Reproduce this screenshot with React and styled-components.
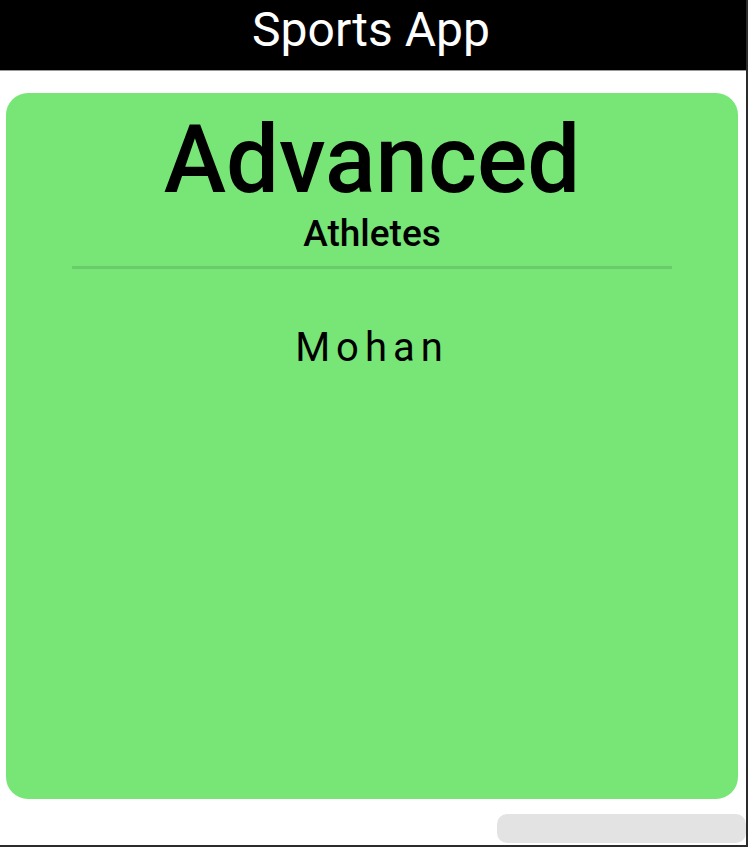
import React from "react"
import styled, { createGlobalStyle } from "styled-components"

const GlobalStyle = createGlobalStyle`
  html, body {
    margin: 0;
    padding: 0;
    background: #ffffff;
  }
  body {
    font-family: Roboto, "Noto Sans", sans-serif;
  }
`

const Screen = styled.div`
  width: 748px;
  height: 847px;
  box-sizing: border-box;
  border-right: 2px solid #2b2b2b;
  border-bottom: 2px solid #2b2b2b;
  display: flex;
  flex-direction: column;
  overflow: hidden;
`

const TopBar = styled.header`
  height: 71px;
  flex-shrink: 0;
  background: #000000;
  border-bottom: 1px solid #9a9a9a;
  display: flex;
  justify-content: center;
  padding-top: 6px;
  box-sizing: border-box;
`

const Title = styled.h1`
  margin: 0;
  color: #ffffff;
  font-size: 48px;
  font-weight: 400;
  line-height: 48px;
  padding-right: 4px;
`

const Content = styled.main`
  padding: 22px 8px 0 6px;
`

const Card = styled.section`
  height: 706px;
  background: #77e677;
  border-radius: 22px;
  display: flex;
  flex-direction: column;
  align-items: center;
  padding-top: 20px;
  box-sizing: border-box;
`

const Level = styled.h2`
  margin: 0;
  font-size: 94px;
  font-weight: 500;
  line-height: 94px;
  color: #000000;
`

const Label = styled.h3`
  margin: 8px 0 0;
  font-size: 37px;
  font-weight: 500;
  line-height: 37px;
  color: #000000;
`

const Divider = styled.hr`
  width: 600px;
  height: 3px;
  margin: 14px 0 0;
  border: 0;
  background: #6acc6a;
`

const Athlete = styled.p`
  margin: 59px 0 0;
  font-size: 40px;
  font-weight: 400;
  line-height: 40px;
  letter-spacing: 6px;
  color: #000000;
`

const Footer = styled.footer`
  display: flex;
  justify-content: flex-end;
  padding-top: 15px;
`

const Pill = styled.div`
  width: 249px;
  height: 29px;
  background: #e3e3e3;
  border-radius: 10px;
`

const App = () => (
  <>
    <GlobalStyle />
    <Screen>
      <TopBar>
        <Title>Sports App</Title>
      </TopBar>
      <Content>
        <Card>
          <Level>Advanced</Level>
          <Label>Athletes</Label>
          <Divider />
          <Athlete>Mohan</Athlete>
        </Card>
      </Content>
      <Footer>
        <Pill />
      </Footer>
    </Screen>
  </>
)

export default App
